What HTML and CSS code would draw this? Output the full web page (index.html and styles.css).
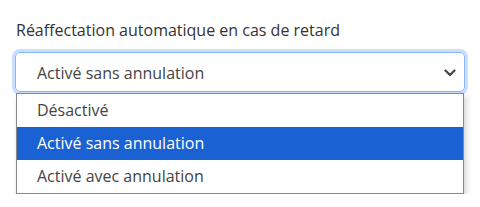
FILE: index.html
```html
<!DOCTYPE html>
<html>
<head>
    <meta charset="UTF-8">
    <title>Réaffectation</title>
    <link rel="stylesheet" href="styles.css">
</head>
<body>
    <div class="field">
        <div class="field-label">Réaffectation automatique en cas de retard</div>
        <div class="select">
            <span class="select-value">Activé sans annulation</span>
            <svg class="select-arrow" width="12" height="8" viewBox="0 0 12 8">
                <path d="M1.5 1.5 L6 6 L10.5 1.5" fill="none" stroke="#444" stroke-width="2.2" stroke-linecap="round" stroke-linejoin="round"/>
            </svg>
        </div>
        <div class="dropdown">
            <div class="dropdown-item">Désactivé</div>
            <div class="dropdown-item selected">Activé sans annulation</div>
            <div class="dropdown-item">Activé avec annulation</div>
        </div>
    </div>
</body>
</html>
```

FILE: styles.css
```css
body {
    margin: 0;
    padding: 0;
    background-color: #ffffff;
    font-family: "Open Sans", Arial, sans-serif;
    font-size: 16px;
    color: #333333;
}

.field {
    padding: 20px 15px 0 15px;
    width: 450px;
}

.field-label {
    line-height: 20px;
    margin-left: 1px;
    margin-bottom: 12px;
    color: #333333;
}

/* Поле выбора в фокусе */
.select {
    box-sizing: border-box;
    height: 40px;
    width: 450px;
    border: 1px solid #86b7fe;
    border-radius: 5px;
    box-shadow: 0 0 0 3px rgba(13, 110, 253, 0.22);
    display: flex;
    align-items: center;
    justify-content: space-between;
    padding: 0 8px 0 21px;
    color: #444444;
}

.select-value {
    line-height: 20px;
    padding-top: 2px;
}

.select-arrow {
    margin-top: 2px;
}

/* Выпадающий список */
.dropdown {
    box-sizing: border-box;
    width: 448px;
    margin: 1px 0 0 1px;
    border: 1px solid #8a8a8a;
    background-color: #ffffff;
    box-shadow: 2px 3px 6px rgba(0, 0, 0, 0.18);
}

.dropdown-item {
    height: 33px;
    line-height: 33px;
    padding-left: 20px;
    color: #444444;
}

.dropdown-item.selected {
    background-color: #1a62d3;
    color: #ffffff;
}
```
